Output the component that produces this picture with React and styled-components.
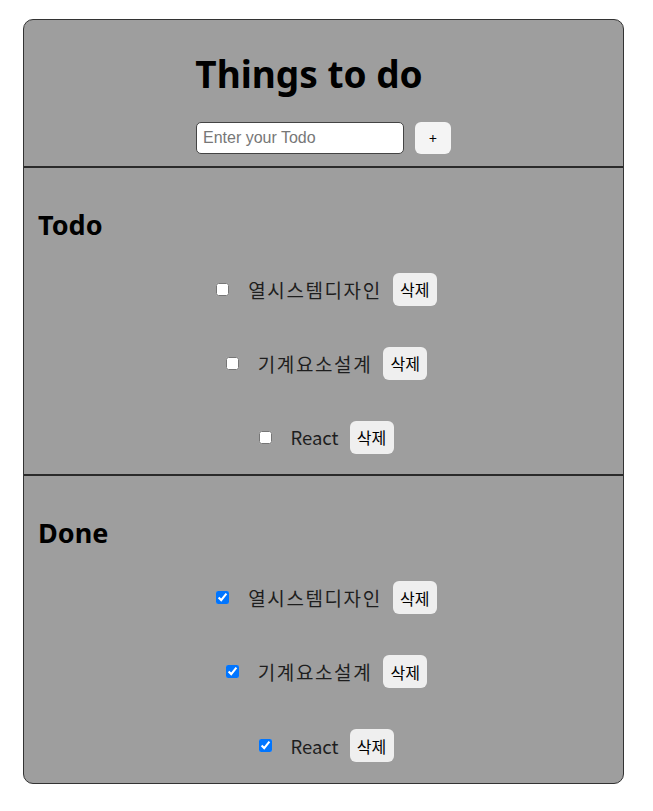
import React, { useState } from 'react'
import styled, { createGlobalStyle } from 'styled-components'

const GlobalStyle = createGlobalStyle`
  body {
    margin: 0;
    background: #fff;
    font-family: "Noto Sans", "Noto Sans CJK KR", sans-serif;
  }
`

const Card = styled.div`
  width: 601px;
  height: 765px;
  box-sizing: border-box;
  margin: 19px 0 0 23px;
  background: #9e9e9e;
  border: 1px solid #333;
  border-radius: 10px;
  display: flex;
  flex-direction: column;
  overflow: hidden;
`

const Header = styled.div`
  height: 148px;
  box-sizing: border-box;
  padding-top: 29px;
  border-bottom: 2px solid #2a2a2a;
  display: flex;
  flex-direction: column;
  align-items: center;
`

const Title = styled.h1`
  margin: 0;
  padding-right: 29px;
  font-size: 37px;
  line-height: 50px;
  font-weight: 700;
  color: #000;
`

const Form = styled.form`
  display: flex;
  gap: 11px;
  margin-top: 23px;
`

const Input = styled.input`
  width: 208px;
  height: 32px;
  box-sizing: border-box;
  border: 1px solid #444;
  border-radius: 5px;
  padding: 0 6px;
  font-family: "Liberation Sans", Arial, sans-serif;
  font-size: 16px;
  background: #fff;

  &::placeholder {
    color: #777;
  }
`

const Button = styled.button`
  height: ${p => p.$h}px;
  min-width: ${p => p.$w}px;
  box-sizing: border-box;
  border: none;
  border-radius: 6px;
  background: ${p => p.$bg};
  color: #000;
  font-family: "Noto Sans CJK KR", "Noto Sans", sans-serif;
  font-size: ${p => p.$fs}px;
  padding: 0 5px;
  cursor: pointer;
`

const Section = styled.div`
  height: ${p => p.$h}px;
  box-sizing: border-box;
  padding: 38px 14px 0;
  border-bottom: ${p => (p.$last ? 'none' : '2px solid #2a2a2a')};
`

const Heading = styled.h2`
  margin: 0;
  font-size: 27px;
  line-height: 38px;
  font-weight: 700;
  color: #000;
`

const List = styled.ul`
  list-style: none;
  margin: 29px 0 0;
  padding: 0;
  display: flex;
  flex-direction: column;
  gap: 41px;
`

const Row = styled.li`
  display: flex;
  align-items: center;
  justify-content: center;
  height: 33px;
  padding-left: 6px;
`

const Check = styled.input`
  width: 13px;
  height: 13px;
  margin: 0 ${p => (p.$hangul ? 19 : 18)}px 0 0;
`

const Label = styled.span`
  font-family: "Noto Sans CJK KR", "Noto Sans", sans-serif;
  font-size: ${p => (p.$hangul ? 19 : 18.5)}px;
  letter-spacing: ${p => (p.$hangul ? 1.6 : 0)}px;
  color: #1e1e1e;
  margin-right: ${p => (p.$hangul ? 11 : 11)}px;
`

const items = ['열시스템디자인', '기계요소설계', 'React']

const TodoList = ({ title, done, height, last }) => (
  <Section $h={height} $last={last}>
    <Heading>{title}</Heading>
    <List>
      {items.map(item => {
        const hangul = /[가-힣]/.test(item)
        return (
          <Row key={item}>
            <Check type='checkbox' defaultChecked={done} $hangul={hangul} />
            <Label $hangul={hangul}>{item}</Label>
            <Button $w={44} $h={33} $bg='#efefef' $fs={16}>삭제</Button>
          </Row>
        )
      })}
    </List>
  </Section>
)

const App = () => {
  const [text, setText] = useState('')
  return (
    <>
      <GlobalStyle />
      <Card>
        <Header>
          <Title>Things to do</Title>
          <Form onSubmit={e => e.preventDefault()}>
            <Input
              placeholder='Enter your Todo'
              value={text}
              onChange={e => setText(e.target.value)}
            />
            <Button type='submit' $w={36} $h={32} $bg='#f4f4f4' $fs={14}>+</Button>
          </Form>
        </Header>
        <TodoList title='Todo' height={309} />
        <TodoList title='Done' done height={307} last />
      </Card>
    </>
  )
}

export default App
